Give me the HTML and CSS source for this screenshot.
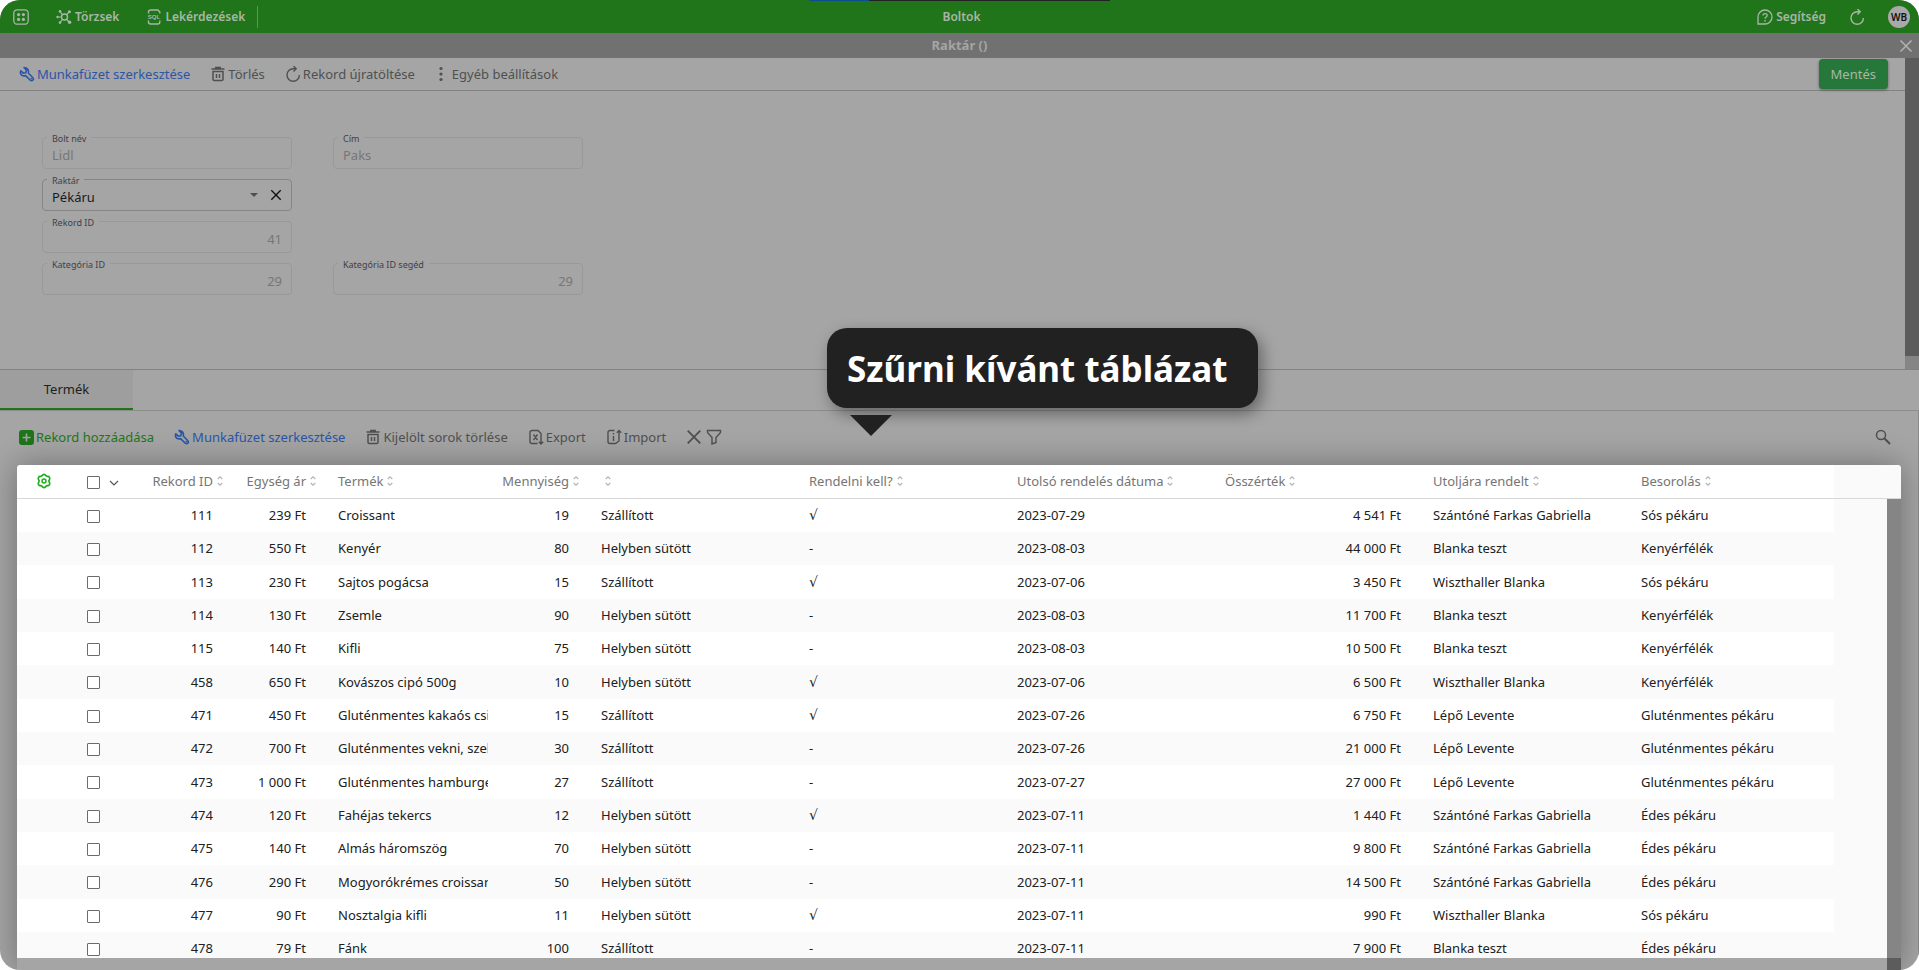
FILE: index.html
```html
<!DOCTYPE html>
<html lang="hu">
<head>
<meta charset="utf-8">
<title>Boltok</title>
<link rel="stylesheet" href="styles.css">
</head>
<body>
<svg class="sprite" aria-hidden="true">
  <symbol id="wrench" viewBox="0 0 16 16"><path d="M5 1.500 7.500 4.200 6.800 6.800 4.300 7.200 1.800 4.800C.8 7 1.800 9 4 9.700c1 .3 1.800.1 2.600-.1l4.700 4.600c1.800 1.500 4-.7 2.600-2.500L9.300 7c.8-3.200-1.300-5.600-4.300-5.500Z" fill="none" stroke="currentColor" stroke-width="1.600" stroke-linejoin="round"/><circle cx="12.300" cy="12.600" r=".8" fill="currentColor"/></symbol>
  <symbol id="trash" viewBox="0 0 16 16"><path d="M1.500 3h13M5 1.500h6M3 5.500v7.700c0 .8.5 1.300 1.300 1.300h7.400c.8 0 1.300-.5 1.300-1.300V5.500ZM6.500 8v4M9.500 8v4" fill="none" stroke="currentColor" stroke-width="1.500"/></symbol>
  <symbol id="reload" viewBox="0 0 16 16"><path d="M10.500 2.800H8.200a6.200 6.200 0 1 0 6.200 6.200M8.500 0l2.700 2.800-2.700 2.700" fill="none" stroke="currentColor" stroke-width="1.400"/></symbol>
  <symbol id="cross" viewBox="0 0 14 14"><path d="M1.500 1.500l11 11M12.500 1.500l-11 11" fill="none" stroke="currentColor" stroke-width="1.600"/></symbol>
  <symbol id="sort" viewBox="0 0 6 10"><path d="M.7 3 3 .8 5.300 3M.7 7 3 9.200 5.300 7" fill="none" stroke="currentColor" stroke-width="1.200"/></symbol>
</svg>
<div class="app">
  <header class="topbar">
    <nav class="topbar-side">
      <button class="top-btn" aria-label="Menü"><svg class="icon" viewBox="0 0 16 16"><rect x=".8" y=".8" width="14.400" height="14.400" rx="3.500" fill="none" stroke="currentColor" stroke-width="1.300"/><g fill="currentColor"><circle cx="5.600" cy="5.600" r="1.600"/><circle cx="10.400" cy="5.600" r="1.600"/><circle cx="5.600" cy="10.400" r="1.600"/><circle cx="10.400" cy="10.400" r="1.600"/></g></svg></button>
      <button class="top-btn"><svg class="icon" viewBox="0 0 16 16"><circle cx="8.500" cy="8" r="3" fill="none" stroke="currentColor" stroke-width="1.400"/><path d="M5.500 8H1.500M6.600 5.800 4 2.500M10.500 5.800 13 3M6.600 10.200 4 13.500M10.500 10.200 13 13" fill="none" stroke="currentColor" stroke-width="1.200"/><g fill="currentColor"><circle cx="1.500" cy="8" r="1.200"/><circle cx="4" cy="2.400" r="1.300"/><circle cx="13.400" cy="2.800" r="1.500"/><circle cx="4" cy="13.600" r="1.300"/><circle cx="13.600" cy="13.300" r="1.700"/></g></svg>Törzsek</button>
      <button class="top-btn"><svg class="icon" viewBox="0 0 16 16"><path d="M2.500 4.500V3a2 2 0 0 1 2-2H12l1.800 2v1.500M2.500 11.500V13a2 2 0 0 0 2 2h7.300a2 2 0 0 0 2-2v-1.500" fill="none" stroke="currentColor" stroke-width="1.400"/><text x="8" y="10.300" text-anchor="middle" class="sql">SQL</text></svg>Lekérdezések</button>
      <span class="divider"></span>
    </nav>
    <div class="activity"><i></i></div>
    <h1 class="topbar-title">Boltok</h1>
    <div class="topbar-side end">
      <button class="top-btn"><svg class="icon" viewBox="0 0 16 16"><path d="M1 15V8a7 7 0 1 1 7 7Z" fill="none" stroke="currentColor" stroke-width="1.300"/><path d="M6 6.500c0-2.700 4.200-2.500 4.200 0C10.200 8 8 8 8 9.700" fill="none" stroke="currentColor" stroke-width="1.300"/><circle cx="8" cy="11.800" r=".9" fill="currentColor"/></svg>Segítség</button>
      <button class="top-btn" aria-label="Frissítés"><svg class="icon"><use href="#reload"/></svg></button>
      <button class="avatar">WB</button>
    </div>
  </header>
  <div class="titlebar">
    <h2>Raktár ()</h2>
    <button class="close" aria-label="Bezárás"><svg class="icon-s"><use href="#cross"/></svg></button>
  </div>

  <div class="record">
    <div class="record-main">
      <div class="toolbar main-tools">
        <button class="tool blue"><svg class="icon"><use href="#wrench"/></svg>Munkafüzet szerkesztése</button>
        <button class="tool"><svg class="icon"><use href="#trash"/></svg>Törlés</button>
        <button class="tool"><svg class="icon"><use href="#reload"/></svg>Rekord újratöltése</button>
        <button class="tool more"><svg class="dots" viewBox="0 0 4 16"><g fill="currentColor"><circle cx="2" cy="2.500" r="1.600"/><circle cx="2" cy="8" r="1.600"/><circle cx="2" cy="13.500" r="1.600"/></g></svg>Egyéb beállítások</button>
        <button class="save">Mentés</button>
      </div>
      <form class="fields">
        <div class="field"><label for="f1">Bolt név</label><input id="f1" value="Lidl" disabled></div>
        <div class="field"><label for="f2">Cím</label><input id="f2" value="Paks" disabled></div>
        <div class="field active"><label for="f3">Raktár</label><select id="f3"><option>Pékáru</option></select><svg class="caret" viewBox="0 0 8 4"><path d="M0 0h8L4 4Z" fill="currentColor"/></svg><button type="button" class="clear" aria-label="Törlés"><svg class="icon-xs"><use href="#cross"/></svg></button></div>
        <div class="field num first"><label for="f4">Rekord ID</label><input id="f4" value="41" disabled></div>
        <div class="field num first"><label for="f5">Kategória ID</label><input id="f5" value="29" disabled></div>
        <div class="field num"><label for="f6">Kategória ID segéd</label><input id="f6" value="29" disabled></div>
      </form>
    </div>
    <div class="page-scroll"><i></i></div>
  </div>

  <div class="tabs"><button class="tab">Termék</button></div>

  <section class="details">
    <div class="toolbar sub-tools">
      <button class="tool green"><svg class="icon" viewBox="0 0 16 16"><rect x="1" y="1" width="15" height="15" rx="3" fill="currentColor"/><path d="M8.500 4.500v8M4.500 8.500h8" class="plus"/></svg>Rekord hozzáadása</button>
      <button class="tool blue"><svg class="icon"><use href="#wrench"/></svg>Munkafüzet szerkesztése</button>
      <button class="tool"><svg class="icon"><use href="#trash"/></svg>Kijelölt sorok törlése</button>
      <button class="tool"><svg class="icon" viewBox="0 0 16 16"><path d="M9.500 14.500H4a2 2 0 0 1-2-2v-9a2 2 0 0 1 2-2h6l3 3V10M5.500 5.500l4 5.500M9.500 5.500l-4 5.500M13 9.500V15M10.800 12.800 13 15l2.200-2.200" fill="none" stroke="currentColor" stroke-width="1.400"/></svg>Export</button>
      <button class="tool"><svg class="icon" viewBox="0 0 16 16"><path d="M8.500 1.500H4a2 2 0 0 0-2 2v9a2 2 0 0 0 2 2h5.500L13 12V7M7.500 7v5M7.500 4v1.500M13 8V1.500M10.800 3.800 13 1.600l2.200 2.200" fill="none" stroke="currentColor" stroke-width="1.400"/></svg>Import</button>
      <span class="filters">
        <button class="tool" aria-label="Szűrők törlése"><svg class="icon"><use href="#cross"/></svg></button>
        <button class="tool" aria-label="Szűrés"><svg class="icon" viewBox="0 0 16 16"><path d="M1.500 1.500h13v2L10 8.500v5l-4 1.500V8.500L1.500 3.500Z" fill="none" stroke="currentColor" stroke-width="1.400"/></svg></button>
      </span>
      <button class="tool search" aria-label="Keresés"><svg class="icon" viewBox="0 0 16 16"><circle cx="6" cy="6" r="4.500" fill="none" stroke="currentColor" stroke-width="1.500"/><path d="M9.300 9.300 15 15" stroke="currentColor" stroke-width="2"/></svg></button>
    </div>

    <div class="grid">
      <table>
        <colgroup><col class="w-gear"><col class="w-check"><col class="w-id"><col class="w-price"><col class="w-name"><col class="w-qty"><col class="w-mid"><col class="w-mid"><col class="w-mid"><col class="w-mid"><col class="w-mid"><col class="w-last"><col></colgroup>
        <thead><tr>
          <th class="gear"><button aria-label="Beállítások"><svg class="icon" viewBox="0 0 16 16"><path d="M6.200 2.600a2 2 0 0 1 3.600 0 2 2 0 0 0 1.500.8 2 2 0 0 1 2.100 3.100 2.500 2.500 0 0 0 0 3 2 2 0 0 1-2.100 3.100 2 2 0 0 0-1.500.8 2 2 0 0 1-3.600 0 2 2 0 0 0-1.500-.8 2 2 0 0 1-2.100-3.100 2.500 2.500 0 0 0 0-3 2 2 0 0 1 2.100-3.100 2 2 0 0 0 1.500-.8Z" fill="none" stroke="currentColor" stroke-width="1.700"/><circle cx="8" cy="8" r="2" fill="none" stroke="currentColor" stroke-width="1.500"/></svg></button></th>
          <th class="sel"><input type="checkbox" aria-label="Összes kijelölése"><svg class="chev" viewBox="0 0 10 6"><path d="M1 1l4 4 4-4" fill="none" stroke="currentColor" stroke-width="1.200"/></svg></th>
          <th class="n">Rekord ID<svg class="sort"><use href="#sort"/></svg></th>
          <th class="n">Egység ár<svg class="sort"><use href="#sort"/></svg></th>
          <th>Termék<svg class="sort"><use href="#sort"/></svg></th>
          <th class="n">Mennyiség<svg class="sort"><use href="#sort"/></svg></th>
          <th><svg class="sort"><use href="#sort"/></svg></th>
          <th>Rendelni kell?<svg class="sort"><use href="#sort"/></svg></th>
          <th>Utolsó rendelés dátuma<svg class="sort"><use href="#sort"/></svg></th>
          <th>Összérték<svg class="sort"><use href="#sort"/></svg></th>
          <th>Utoljára rendelt<svg class="sort"><use href="#sort"/></svg></th>
          <th>Besorolás<svg class="sort"><use href="#sort"/></svg></th>
          <th class="spare"></th>
        </tr></thead>
        <tbody>
          <tr><td></td><td class="sel"><input type="checkbox" aria-label="111"></td><td class="n">111</td><td class="n">239 Ft</td><td>Croissant</td><td class="n">19</td><td>Szállított</td><td class="ok">√</td><td>2023-07-29</td><td class="n">4 541 Ft</td><td>Szántóné Farkas Gabriella</td><td>Sós pékáru</td><td class="spare"></td></tr>
          <tr><td></td><td class="sel"><input type="checkbox" aria-label="112"></td><td class="n">112</td><td class="n">550 Ft</td><td>Kenyér</td><td class="n">80</td><td>Helyben sütött</td><td>-</td><td>2023-08-03</td><td class="n">44 000 Ft</td><td>Blanka teszt</td><td>Kenyérfélék</td><td class="spare"></td></tr>
          <tr><td></td><td class="sel"><input type="checkbox" aria-label="113"></td><td class="n">113</td><td class="n">230 Ft</td><td>Sajtos pogácsa</td><td class="n">15</td><td>Szállított</td><td class="ok">√</td><td>2023-07-06</td><td class="n">3 450 Ft</td><td>Wiszthaller Blanka</td><td>Sós pékáru</td><td class="spare"></td></tr>
          <tr><td></td><td class="sel"><input type="checkbox" aria-label="114"></td><td class="n">114</td><td class="n">130 Ft</td><td>Zsemle</td><td class="n">90</td><td>Helyben sütött</td><td>-</td><td>2023-08-03</td><td class="n">11 700 Ft</td><td>Blanka teszt</td><td>Kenyérfélék</td><td class="spare"></td></tr>
          <tr><td></td><td class="sel"><input type="checkbox" aria-label="115"></td><td class="n">115</td><td class="n">140 Ft</td><td>Kifli</td><td class="n">75</td><td>Helyben sütött</td><td>-</td><td>2023-08-03</td><td class="n">10 500 Ft</td><td>Blanka teszt</td><td>Kenyérfélék</td><td class="spare"></td></tr>
          <tr><td></td><td class="sel"><input type="checkbox" aria-label="458"></td><td class="n">458</td><td class="n">650 Ft</td><td>Kovászos cipó 500g</td><td class="n">10</td><td>Helyben sütött</td><td class="ok">√</td><td>2023-07-06</td><td class="n">6 500 Ft</td><td>Wiszthaller Blanka</td><td>Kenyérfélék</td><td class="spare"></td></tr>
          <tr><td></td><td class="sel"><input type="checkbox" aria-label="471"></td><td class="n">471</td><td class="n">450 Ft</td><td><div class="clip">Gluténmentes kakaós csiga</div></td><td class="n">15</td><td>Szállított</td><td class="ok">√</td><td>2023-07-26</td><td class="n">6 750 Ft</td><td>Lépő Levente</td><td>Gluténmentes pékáru</td><td class="spare"></td></tr>
          <tr><td></td><td class="sel"><input type="checkbox" aria-label="472"></td><td class="n">472</td><td class="n">700 Ft</td><td><div class="clip">Gluténmentes vekni, szeletelt</div></td><td class="n">30</td><td>Szállított</td><td>-</td><td>2023-07-26</td><td class="n">21 000 Ft</td><td>Lépő Levente</td><td>Gluténmentes pékáru</td><td class="spare"></td></tr>
          <tr><td></td><td class="sel"><input type="checkbox" aria-label="473"></td><td class="n">473</td><td class="n">1 000 Ft</td><td><div class="clip">Gluténmentes hamburger</div></td><td class="n">27</td><td>Szállított</td><td>-</td><td>2023-07-27</td><td class="n">27 000 Ft</td><td>Lépő Levente</td><td>Gluténmentes pékáru</td><td class="spare"></td></tr>
          <tr><td></td><td class="sel"><input type="checkbox" aria-label="474"></td><td class="n">474</td><td class="n">120 Ft</td><td>Fahéjas tekercs</td><td class="n">12</td><td>Helyben sütött</td><td class="ok">√</td><td>2023-07-11</td><td class="n">1 440 Ft</td><td>Szántóné Farkas Gabriella</td><td>Édes pékáru</td><td class="spare"></td></tr>
          <tr><td></td><td class="sel"><input type="checkbox" aria-label="475"></td><td class="n">475</td><td class="n">140 Ft</td><td>Almás háromszög</td><td class="n">70</td><td>Helyben sütött</td><td>-</td><td>2023-07-11</td><td class="n">9 800 Ft</td><td>Szántóné Farkas Gabriella</td><td>Édes pékáru</td><td class="spare"></td></tr>
          <tr><td></td><td class="sel"><input type="checkbox" aria-label="476"></td><td class="n">476</td><td class="n">290 Ft</td><td><div class="clip">Mogyorókrémes croissant</div></td><td class="n">50</td><td>Helyben sütött</td><td>-</td><td>2023-07-11</td><td class="n">14 500 Ft</td><td>Szántóné Farkas Gabriella</td><td>Édes pékáru</td><td class="spare"></td></tr>
          <tr><td></td><td class="sel"><input type="checkbox" aria-label="477"></td><td class="n">477</td><td class="n">90 Ft</td><td>Nosztalgia kifli</td><td class="n">11</td><td>Helyben sütött</td><td class="ok">√</td><td>2023-07-11</td><td class="n">990 Ft</td><td>Wiszthaller Blanka</td><td>Sós pékáru</td><td class="spare"></td></tr>
          <tr><td></td><td class="sel"><input type="checkbox" aria-label="478"></td><td class="n">478</td><td class="n">79 Ft</td><td>Fánk</td><td class="n">100</td><td>Szállított</td><td>-</td><td>2023-07-11</td><td class="n">7 900 Ft</td><td>Blanka teszt</td><td>Édes pékáru</td><td class="spare"></td></tr>
        </tbody>
      </table>
      <div class="grid-scroll"></div>
    </div>
    <div class="grid-foot"><i></i></div>
    <div class="callout" role="tooltip">Szűrni kívánt táblázat</div>
  </section>
</div>
</body>
</html>
```
FILE: styles.css
```css
* { box-sizing: border-box; }
body {
  margin: 0;
  background: #fff;
  font: 13px/20px "Noto Sans", sans-serif;
  color: #202020;
}
button, input, select { font: inherit; color: inherit; }
button { border: 0; padding: 0; background: none; display: flex; align-items: center; }
h1, h2 { margin: 0; font-size: 13px; line-height: 20px; }
svg { display: block; flex: none; }
.sprite { position: absolute; width: 0; height: 0; }
.icon { width: 16px; height: 16px; }
.icon-s { width: 14px; height: 14px; }
.icon-xs { width: 12px; height: 12px; }

.app {
  height: 100vh;
  display: flex;
  flex-direction: column;
  overflow: hidden;
  border-radius: 20px;
  background: #a5a5a5;
}

.topbar {
  position: relative;
  height: 33px;
  flex: none;
  display: flex;
  align-items: center;
  background: #20751a;
  color: #a9b5a8;
}
.topbar-side { flex: 1; display: flex; align-items: center; padding-left: 13px; gap: 27px; }
.topbar-side.end { justify-content: flex-end; padding: 0 9px 0 0; gap: 23px; }
.topbar-title { font-size: 12px; font-weight: 600; }
.top-btn { gap: 3px; font-size: 12px; font-weight: 600; }
.divider { width: 1px; height: 22px; margin-left: -15px; background: #5c9558; }
.sql { font: bold 6px "Liberation Sans", sans-serif; fill: currentColor; }
.avatar {
  width: 22px;
  height: 22px;
  border-radius: 50%;
  justify-content: center;
  background: #a9a9a9;
  color: #111;
  font-size: 10px;
  font-weight: 600;
}
.activity { position: absolute; top: 0; left: 809px; width: 301px; height: 1px; background: #222; }
.activity i { display: block; width: 60px; height: 1px; background: #0c4f90; }

.titlebar {
  height: 25px;
  flex: none;
  display: flex;
  align-items: center;
  justify-content: center;
  position: relative;
  padding-bottom: 1px;
  background: #717171;
  color: #a5a5a5;
}
.close { position: absolute; right: 6px; top: 6px; color: #b0b0b0; }

.record { display: flex; flex: none; }
.record-main { flex: 1; }
.page-scroll { width: 14px; background: #858585; padding-bottom: 13px; display: flex; }
.page-scroll i { flex: 1; background: #5c5c5c; }

.toolbar { display: flex; align-items: center; color: #505050; }
.main-tools { height: 33px; padding: 0 17px 1px 19px; gap: 20px; border-bottom: 1px solid #828282; }
.tool { gap: 2px; }
.blue { color: #2a55a8; }
.green { color: #1f7519; }
.more { gap: 9px; margin-left: 4px; }
.dots { width: 4px; height: 16px; }
.save {
  margin-left: auto;
  height: 30px;
  padding: 0 12px;
  border-radius: 4px;
  background: #25783a;
  color: #a5b8a9;
  box-shadow: 0 1px 3px #0006;
}

.fields {
  padding: 46px 42px 74px;
  display: grid;
  grid-template-columns: 250px 250px;
  gap: 10px 41px;
}
.field {
  position: relative;
  height: 32px;
  border: 1px solid #999;
  border-radius: 4px;
  display: flex;
  align-items: center;
  color: #777;
}
.field.active { border-color: #858585; color: #1a1a1a; }
.field.first { grid-column: 1; }
.field label {
  position: absolute;
  left: 4px;
  top: -6px;
  padding: 0 5px;
  font-size: 9px;
  line-height: 14px;
  background: #a5a5a5;
  color: #404048;
}
.field input, .field select {
  flex: 1;
  min-width: 0;
  border: 0;
  padding: 3px 9px 0;
  background: none;
  appearance: none;
  height: 30px;
  opacity: 1;
}
.num input { text-align: right; }
.caret { width: 8px; height: 4px; margin-right: 12px; color: #505050; }
.clear { margin-right: 9px; color: #111; }

.tabs { height: 42px; flex: none; border-top: 1px solid #828282; border-bottom: 1px solid #8c8c8c; display: flex; }
.tab {
  width: 133px;
  justify-content: center;
  background: #9e9e9e;
  border-bottom: 2px solid #20751a;
}

.details {
  flex: 1;
  min-height: 0;
  position: relative;
  display: flex;
  flex-direction: column;
  border-right: 1px solid #8a8a8a;
}
.sub-tools { height: 54px; flex: none; padding: 0 27px 2px 18px; gap: 20px; }
.filters { display: flex; gap: 4px; }
.search { margin-left: auto; }
.plus { stroke: #a5a5a5; stroke-width: 1.6; }

.grid {
  position: relative;
  flex: 1;
  min-height: 0;
  margin: 0 17px;
  overflow: hidden;
  border-radius: 4px 4px 0 0;
  background: #fafafa;
}
.details::before {
  content: "";
  position: absolute;
  inset: 54px 17px 0;
  box-shadow: 0 0 30px #0005;
}
table { width: 100%; table-layout: fixed; border-collapse: separate; border-spacing: 0; }
.w-gear { width: 60px; }
.w-check { width: 66px; }
.w-id { width: 92px; }
.w-price { width: 93px; }
.w-name { width: 170px; }
.w-qty { width: 93px; }
.w-mid { width: 208px; }
.w-last { width: 203px; }
th, td { padding: 0 10px 1px; text-align: left; font-weight: 400; white-space: nowrap; }
th { height: 34px; background: #fff; border-bottom: 1px solid #d8d8d8; color: #757575; }
td { height: 33px; }
tr:nth-child(3n) td { height: 34px; }
tbody tr:nth-child(odd) td { background: #fff; }
tr .spare, tbody tr:nth-child(odd) .spare { background: #fafafa; }
.n { text-align: right; padding-right: 22px; }
th.n { padding-left: 0; padding-right: 12px; }
.clip { overflow: hidden; }
.sort { display: inline-block; width: 6px; height: 10px; margin-left: 4px; color: #b5b5b5; }
.gear button { margin-left: 9px; color: #1fae1a; }
.sel input {
  appearance: none;
  display: inline-block;
  width: 13px;
  height: 13px;
  margin: 0 0 1px;
  border: 1px solid #6b6b6b;
  border-radius: 1px;
  background: #fff;
  vertical-align: middle;
}
.chev { display: inline-block; width: 10px; height: 6px; margin-left: 9px; vertical-align: middle; color: #555; }
.ok { font-family: "DejaVu Sans", sans-serif; font-size: 14px; }
.grid-scroll { position: absolute; top: 34px; right: 0; bottom: 0; width: 14px; background: #858585; }
.grid-foot { position: relative; height: 12px; flex: none; margin-right: 17px; display: flex; justify-content: flex-end; }
.grid-foot i { width: 14px; background: #5c5c5c; }

.callout {
  position: absolute;
  top: -83px;
  left: 827px;
  height: 80px;
  padding: 2px 30px 0 20px;
  border-radius: 20px;
  display: flex;
  align-items: center;
  background: #212121;
  color: #fff;
  font-size: 35px;
  font-weight: 700;
  white-space: nowrap;
  box-shadow: 4px 6px 16px #0006;
}
.callout::after {
  content: "";
  position: absolute;
  left: 23px;
  top: 87px;
  border: solid transparent;
  border-width: 21px 21px 0;
  border-top-color: #212121;
}
```
